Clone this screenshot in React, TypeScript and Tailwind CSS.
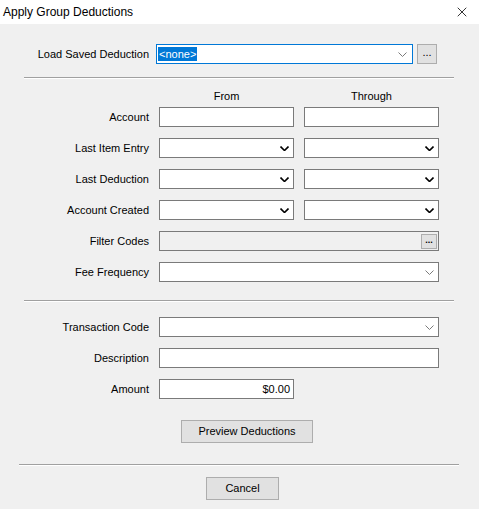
import { X } from "lucide-react"

const font = { fontFamily: '"Liberation Sans", Arial, sans-serif' }

function Chevron({ bold }: { bold?: boolean }) {
  // dark chevron on date combos, light one on list combos
  return (
    <svg width="9" height="5" viewBox="0 0 9 5" className="shrink-0">
      <path
        d="M0.5 0.5 L4.5 4.5 L8.5 0.5"
        fill="none"
        stroke={bold ? "#000" : "#7a7a7a"}
        strokeWidth={bold ? 1.6 : 1}
      />
    </svg>
  )
}

function TextBox({ wide, children, right }: { wide?: boolean; children?: React.ReactNode; right?: boolean }) {
  return (
    <div
      className={`h-[20px] ${wide ? "w-[280px]" : "w-[135px]"} bg-white border border-[#7a7a7a] flex items-center px-[3px] text-[11px] ${right ? "justify-end" : ""}`}
    >
      {children}
    </div>
  )
}

function Combo({ wide, bold }: { wide?: boolean; bold?: boolean }) {
  return (
    <div
      className={`h-[20px] ${wide ? "w-[280px]" : "w-[135px]"} bg-white border border-[#7a7a7a] flex items-center justify-end pr-[4px]`}
    >
      <Chevron bold={bold} />
    </div>
  )
}

function Row({ label, children }: { label: string; children: React.ReactNode }) {
  return (
    <div className="flex items-center h-[20px]">
      <div className="w-[149px] text-right text-[11px] text-black">{label}</div>
      <div className="ml-[10px] flex gap-[10px]">{children}</div>
    </div>
  )
}

function Separator({ className }: { className?: string }) {
  return (
    <div className={className}>
      <div className="h-px bg-[#a0a0a0]" />
      <div className="h-px bg-white" />
    </div>
  )
}

function Button({ label, className }: { label: string; className: string }) {
  return (
    <button
      className={`h-[23px] bg-[#e1e1e1] border border-[#adadad] text-[11px] text-black flex items-center justify-center ${className}`}
    >
      {label}
    </button>
  )
}

export default function App() {
  return (
    <div className="w-[479px] h-[509px] bg-[#f0f0f0] flex flex-col overflow-hidden" style={font}>
      {/* title bar */}
      <div className="h-[24px] bg-white flex items-center justify-between pl-[3px] pr-[9px]">
        <span className="text-[12px] text-black">Apply Group Deductions</span>
        <X size={16} strokeWidth={1.2} color="#000" />
      </div>

      <div className="flex flex-col">
        <div className="mt-[20px] flex items-center h-[20px]">
          <div className="w-[149px] text-right text-[11px]">Load Saved Deduction</div>
          <div className="ml-[7px] w-[257px] h-[20px] bg-white border border-[#0078d7] flex items-center justify-between pl-[1px] pr-[5px]">
            <span className="bg-[#0078d7] text-white text-[11px] leading-[14px] px-[1px]">&lt;none&gt;</span>
            <Chevron />
          </div>
          <div className="ml-[4px] w-[20px] h-[20px] bg-[#e1e1e1] border border-[#adadad] flex items-center justify-center text-[11px] leading-none pb-[4px]">
            ...
          </div>
        </div>

        <Separator className="mt-[13px] ml-[24px] w-[430px]" />

        <div className="flex h-[15px] mt-[10px] text-[11px] leading-[15px]">
          <div className="w-[159px]" />
          <div className="w-[135px] text-center">From</div>
          <div className="w-[10px]" />
          <div className="w-[135px] text-center">Through</div>
        </div>

        <div className="mt-[3px] flex flex-col gap-[11px]">
          <Row label="Account">
            <TextBox />
            <TextBox />
          </Row>
          <Row label="Last Item Entry">
            <Combo bold />
            <Combo bold />
          </Row>
          <Row label="Last Deduction">
            <Combo bold />
            <Combo bold />
          </Row>
          <Row label="Account Created">
            <Combo bold />
            <Combo bold />
          </Row>
          <Row label="Filter Codes">
            <div className="h-[20px] w-[280px] bg-[#f0f0f0] border border-[#7a7a7a] flex items-center justify-end pr-[1px]">
              <div className="w-[16px] h-[15px] bg-[#e1e1e1] border border-[#adadad] flex items-end justify-center">
                <span className="text-[9px] leading-[9px] font-bold pb-[3px]">...</span>
              </div>
            </div>
          </Row>
          <Row label="Fee Frequency">
            <Combo wide />
          </Row>
        </div>

        <Separator className="mt-[18px] ml-[24px] w-[430px]" />

        <div className="mt-[15px] flex flex-col gap-[11px]">
          <Row label="Transaction Code">
            <Combo wide />
          </Row>
          <Row label="Description">
            <TextBox wide />
          </Row>
          <Row label="Amount">
            <TextBox right>$0.00</TextBox>
          </Row>
        </div>

        <div className="mt-[21px] flex justify-center">
          <Button label="Preview Deductions" className="w-[132px] ml-[15px]" />
        </div>

        <Separator className="mt-[21px] ml-[19px] w-[440px]" />

        <div className="mt-[11px] flex justify-center">
          <Button label="Cancel" className="w-[73px] ml-[6px]" />
        </div>
      </div>
    </div>
  )
}
